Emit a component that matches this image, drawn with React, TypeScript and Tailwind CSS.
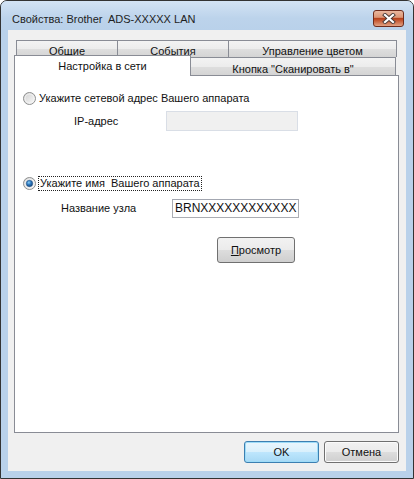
import React from 'react';

const font = { fontFamily: '"Liberation Sans", Arial, sans-serif' };

function Radio({ checked }: { checked?: boolean }) {
  return (
    <svg width="13" height="13" viewBox="0 0 13 13" className="shrink-0">
      <defs>
        <linearGradient id={checked ? 'rg-on' : 'rg-off'} x1="0" y1="0" x2="1" y2="1">
          <stop offset="0" stopColor="#cfcfcf" />
          <stop offset="1" stopColor="#fbfbfb" />
        </linearGradient>
        <radialGradient id="dot" cx="0.4" cy="0.35" r="0.7">
          <stop offset="0" stopColor="#8fd0f6" />
          <stop offset="0.45" stopColor="#2f7cc2" />
          <stop offset="1" stopColor="#123f73" />
        </radialGradient>
      </defs>
      <circle cx="6.5" cy="6.5" r="6" fill={`url(#${checked ? 'rg-on' : 'rg-off'})`} stroke="#8e8f8f" />
      <circle cx="6.5" cy="6.5" r="4.5" fill="none" stroke="#f4f4f4" strokeWidth="0.8" />
      {checked && <circle cx="6.5" cy="6.5" r="3.2" fill="url(#dot)" stroke="#1b4f86" strokeWidth="0.5" />}
    </svg>
  );
}

function CloseButton() {
  return (
    <div className="w-[31px] h-[17px] rounded-[3px] border border-[#6e2c1c] bg-[linear-gradient(#e9b89f_0%,#dc9676_42%,#b6431e_50%,#c2522c_60%,#e2a283_100%)] flex items-center justify-center">
      <svg width="14" height="11" viewBox="0 0 14 11">
        <path d="M3 2 L11 9 M11 2 L3 9" stroke="#4a3a36" strokeWidth="4" strokeLinecap="square" />
        <path d="M3 2 L11 9 M11 2 L3 9" stroke="#ffffff" strokeWidth="2.2" strokeLinecap="square" />
      </svg>
    </div>
  );
}

const tabBg =
  'bg-[linear-gradient(#f3f3f3_0%,#ececec_50%,#dedede_52%,#d4d4d4_100%)]';

export default function App() {
  return (
    <div className="w-[414px] h-[479px] bg-white" style={font}>
      <div className="w-[414px] h-[479px] flex flex-col border border-[#333333] rounded-t-[7px] bg-[#b9d1ea] overflow-hidden text-[11px] text-[#111111]">
        {/* Title bar */}
        <div className="h-[29px] shrink-0 flex items-start justify-between pl-[11px] pr-[9px] bg-[linear-gradient(#d3e3f4,#bcd3eb_60%,#b9d1ea)]">
          <div className="pt-[10px] whitespace-pre text-[11px] text-[#1e1e1e]">Свойства: Brother  ADS-XXXXX LAN</div>
          <div className="pt-[9px]">
            <CloseButton />
          </div>
        </div>

        {/* Client area */}
        <div className="flex-1 mx-[7px] mb-[7px] bg-[#f0f0f0] flex flex-col">
          <div className="pt-[10px] pl-[6px] pr-[7px]">
            {/* Back row of tabs */}
            <div className="flex h-[17px] ml-[2px]">
              <div className={`w-[102px] border border-b-0 border-[#898c95] ${tabBg} flex justify-center items-start pt-[2px]`}>Общие</div>
              <div className={`w-[111px] border border-b-0 border-l-0 border-[#898c95] ${tabBg} flex justify-center items-start pt-[2px]`}>События</div>
              <div className={`w-[168px] border border-b-0 border-l-0 border-[#898c95] ${tabBg} flex justify-center items-start pt-[2px]`}>Управление цветом</div>
            </div>
            {/* Front row of tabs */}
            <div className="flex h-[18px]">
              <div className="relative z-10 w-[177px] h-[21px] -mt-[2px] border border-b-0 border-[#898c95] bg-white flex justify-center pt-[2px]">Настройка в сети</div>
              <div className={`w-[205px] h-[18px] border border-b-0 border-l-0 border-[#898c95] ${tabBg} flex justify-center pt-[3px]`}>Кнопка "Сканировать в"</div>
            </div>
            {/* Panel */}
            <div className="h-[358px] border border-[#898c95] bg-white pl-[8px] pt-[16px]">
              <div className="flex items-center gap-[3px] h-[13px]">
                <Radio />
                <span>Укажите сетевой адрес Вашего аппарата</span>
              </div>
              <div className="flex items-center mt-[6px] pl-[51px] h-[20px]">
                <span className="w-[92px]">IP-адрес</span>
                <div className="w-[132px] h-[20px] border border-[#d9dee6] bg-[#f0f0f0]" />
              </div>
              <div className="flex items-center gap-[2px] h-[13px] mt-[46px]">
                <Radio checked />
                <span className="whitespace-pre border border-dotted border-[#222222] px-[1px] leading-[13px]">Укажите имя  Вашего аппарата</span>
              </div>
              <div className="flex items-center mt-[9px] pl-[38px] h-[19px]">
                <span className="w-[111px]">Название узла</span>
                <div className="w-[127px] h-[19px] border border-[#abadb3] border-t-[#a3a7b1] bg-white overflow-hidden whitespace-nowrap pl-[2px] leading-[17px] text-[12px]">
                  BRNXXXXXXXXXXXX
                </div>
              </div>
              <div className="mt-[19px] ml-[194px] w-[78px] h-[26px] rounded-[3px] border border-[#707070] bg-[linear-gradient(#f2f2f2_0%,#ebebeb_50%,#dddddd_51%,#cfcfcf_100%)] flex items-center justify-center">
                <span>
                  <span className="underline">П</span>росмотр
                </span>
              </div>
            </div>
          </div>
          {/* Dialog buttons */}
          <div className="flex justify-end gap-[5px] pt-[8px] pr-[7px]">
            <div className="w-[75px] h-[22px] rounded-[3px] border border-[#3c7fb1] bg-[linear-gradient(#eaf6fd_0%,#d9f0fc_50%,#bee6fd_51%,#a7d9f5_100%)] shadow-[inset_0_0_0_1px_#9edcf8] flex items-center justify-center">
              OK
            </div>
            <div className="w-[75px] h-[22px] rounded-[3px] border border-[#707070] bg-[linear-gradient(#f2f2f2_0%,#ebebeb_50%,#dddddd_51%,#cfcfcf_100%)] shadow-[inset_0_0_0_1px_#fbfbfb] flex items-center justify-center">
              Отмена
            </div>
          </div>
        </div>
      </div>
    </div>
  );
}
